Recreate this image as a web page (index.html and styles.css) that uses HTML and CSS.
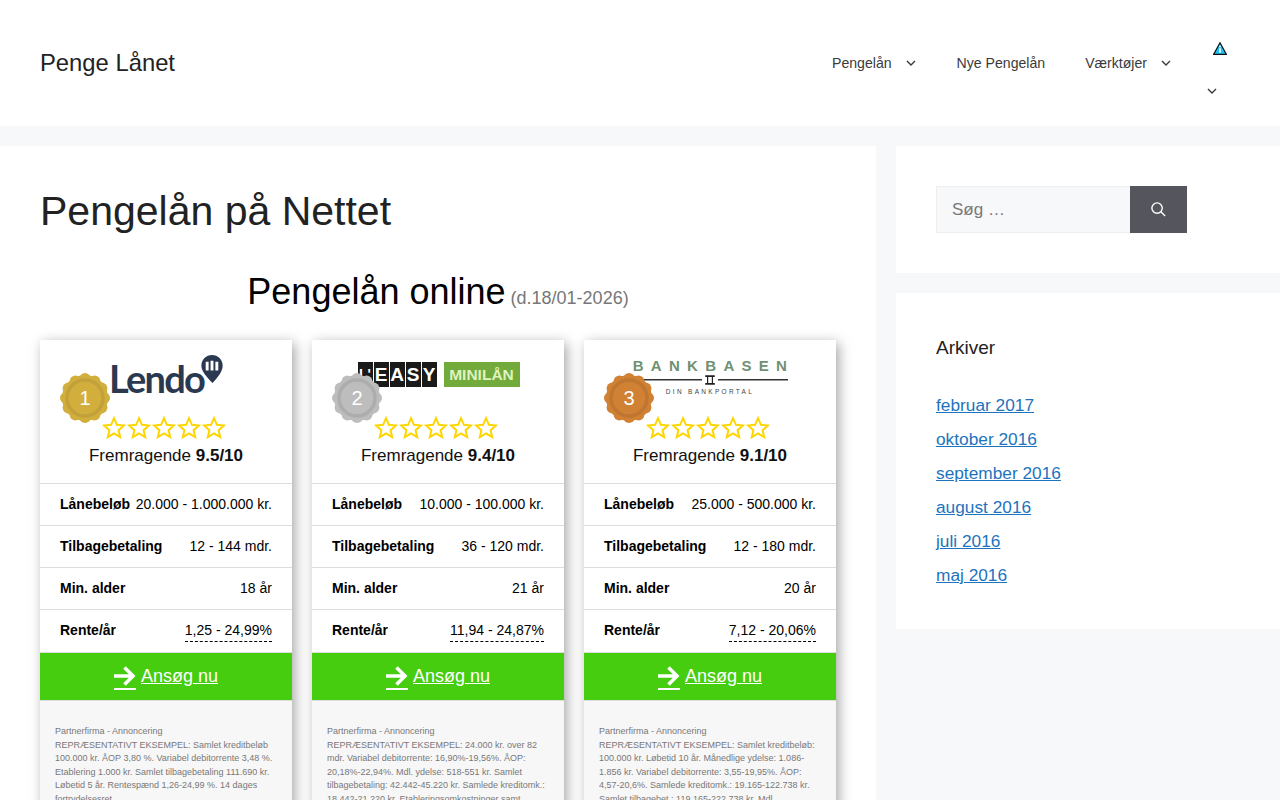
FILE: index.html
```html
<!DOCTYPE html>
<html lang="da">
<head>
<meta charset="utf-8">
<title>Pengelån på Nettet</title>
<link rel="stylesheet" href="styles.css">
</head>
<body>
<svg class="defs" width="0" height="0" aria-hidden="true">
  <symbol id="star" viewBox="0 0 24 24"><path d="M12 2.2l2.9 6.6 7.1.7-5.4 4.7 1.6 7-6.2-3.7-6.2 3.7 1.6-7L2 9.500l7.100-.7z"/></symbol>
  <symbol id="chev" viewBox="0 0 12 12"><path d="M2 4l4 4 4-4"/></symbol>
  <symbol id="medal" viewBox="0 0 50 50">
    <g class="lobes"><circle cx="25" cy="25" r="23"/><circle cx="25" cy="5.800" r="5.800"/><circle cx="34.600" cy="8.400" r="5.800"/><circle cx="41.600" cy="15.400" r="5.800"/><circle cx="44.200" cy="25" r="5.800"/><circle cx="41.600" cy="34.600" r="5.800"/><circle cx="34.600" cy="41.600" r="5.800"/><circle cx="25" cy="44.200" r="5.800"/><circle cx="15.400" cy="41.600" r="5.800"/><circle cx="8.400" cy="34.600" r="5.800"/><circle cx="5.800" cy="25" r="5.800"/><circle cx="8.400" cy="15.400" r="5.800"/><circle cx="15.400" cy="8.400" r="5.800"/></g>
    <circle class="ring" cx="25" cy="25" r="18"/>
  </symbol>
</svg>
<header class="site-header">
  <a class="brand" href="#">Penge Lånet</a>
  <nav class="nav">
    <a class="nav-item" href="#">Pengelån<svg class="chev"><use href="#chev"/></svg></a>
    <a class="nav-item" href="#">Nye Pengelån</a>
    <a class="nav-item" href="#">Værktøjer<svg class="chev"><use href="#chev"/></svg></a>
    <a class="nav-item nav-stack" href="#">
      <svg class="warn" viewBox="0 0 14 13"><path class="warn-bg" d="M7 .8L13.400 12.400H.6z"/><path class="warn-i" d="M6.200 3.700h1.600v1.500H6.200zM6.200 6.200h1.600v4.500H6.200z"/></svg>
      <svg class="chev"><use href="#chev"/></svg>
    </a>
  </nav>
</header>
<div class="layout">
  <main class="content">
    <h1>Pengelån på Nettet</h1>
    <h2 class="list-title">Pengelån online<small> (d.18/01-2026)</small></h2>
    <div class="cards">
      <article class="card medal-1">
        <div class="head">
          <svg class="medal"><use href="#medal"/></svg><span class="medal-num">1</span>
          <div class="logo"><span class="lendo">Lendo</span><svg class="pin" viewBox="0 0 22 30"><path d="M11 0a11 11 0 0 1 11 11c0 6-5 12-10.500 18C6 23 0 17 0 11A11 11 0 0 1 11 0z"/><path class="pin-bars" d="M4.500 7h3v9h-3zM9.500 6h3v10h-3zM14.500 7h3v9h-3z"/></svg></div>
          <div class="stars"><svg><use href="#star"/></svg><svg><use href="#star"/></svg><svg><use href="#star"/></svg><svg><use href="#star"/></svg><svg><use href="#star"/></svg></div>
          <p class="rating">Fremragende <b>9.5/10</b></p>
        </div>
        <div class="row"><b>Lånebeløb</b><span>20.000 - 1.000.000 kr.</span></div>
        <div class="row"><b>Tilbagebetaling</b><span>12 - 144 mdr.</span></div>
        <div class="row"><b>Min. alder</b><span>18 år</span></div>
        <div class="row"><b>Rente/år</b><span class="dashed">1,25 - 24,99%</span></div>
        <a class="apply" href="#"><svg class="arrow" viewBox="0 0 22 20"><path d="M0 10h19M10.500 1.500L19 10l-8.500 8.500"/></svg><span>Ansøg nu</span></a>
        <p class="legal">Partnerfirma - Annoncering<br>REPRÆSENTATIVT EKSEMPEL: Samlet kreditbeløb 100.000 kr. ÅOP 3,80 %. Variabel debitorrente 3,48 %. Etablering 1.000 kr. Samlet tilbagebetaling 111.690 kr. Løbetid 5 år. Rentespænd 1,26-24,99 %. 14 dages fortrydelsesret</p>
      </article>
      <article class="card medal-2">
        <div class="head">
          <svg class="medal"><use href="#medal"/></svg><span class="medal-num">2</span>
          <div class="logo logo-easy"><span class="tiles"><i>L'</i><i>E</i><i>A</i><i>S</i><i>Y</i></span><span class="mini">MINILÅN</span></div>
          <div class="stars"><svg><use href="#star"/></svg><svg><use href="#star"/></svg><svg><use href="#star"/></svg><svg><use href="#star"/></svg><svg><use href="#star"/></svg></div>
          <p class="rating">Fremragende <b>9.4/10</b></p>
        </div>
        <div class="row"><b>Lånebeløb</b><span>10.000 - 100.000 kr.</span></div>
        <div class="row"><b>Tilbagebetaling</b><span>36 - 120 mdr.</span></div>
        <div class="row"><b>Min. alder</b><span>21 år</span></div>
        <div class="row"><b>Rente/år</b><span class="dashed">11,94 - 24,87%</span></div>
        <a class="apply" href="#"><svg class="arrow" viewBox="0 0 22 20"><path d="M0 10h19M10.500 1.500L19 10l-8.500 8.500"/></svg><span>Ansøg nu</span></a>
        <p class="legal">Partnerfirma - Annoncering<br>REPRÆSENTATIVT EKSEMPEL: 24.000 kr. over 82 mdr. Variabel debitorrente: 16,90%-19,56%. ÅOP: 20,18%-22,94%. Mdl. ydelse: 518-551 kr. Samlet tilbagebetaling: 42.442-45.220 kr. Samlede kreditomk.: 18.442-21.220 kr. Etableringsomkostninger samt</p>
      </article>
      <article class="card medal-3">
        <div class="head">
          <svg class="medal"><use href="#medal"/></svg><span class="medal-num">3</span>
          <div class="logo bankbasen"><span class="bb-name">BANKBASEN</span><span class="bb-line"><svg viewBox="0 0 10 10"><path d="M1 1h8v1.500H1zM2.500 2.500h1v5h-1zM6.500 2.500h1v5h-1zM1 7.500h8V9H1z"/></svg></span><span class="bb-sub">DIN BANKPORTAL</span></div>
          <div class="stars"><svg><use href="#star"/></svg><svg><use href="#star"/></svg><svg><use href="#star"/></svg><svg><use href="#star"/></svg><svg><use href="#star"/></svg></div>
          <p class="rating">Fremragende <b>9.1/10</b></p>
        </div>
        <div class="row"><b>Lånebeløb</b><span>25.000 - 500.000 kr.</span></div>
        <div class="row"><b>Tilbagebetaling</b><span>12 - 180 mdr.</span></div>
        <div class="row"><b>Min. alder</b><span>20 år</span></div>
        <div class="row"><b>Rente/år</b><span class="dashed">7,12 - 20,06%</span></div>
        <a class="apply" href="#"><svg class="arrow" viewBox="0 0 22 20"><path d="M0 10h19M10.500 1.500L19 10l-8.500 8.500"/></svg><span>Ansøg nu</span></a>
        <p class="legal">Partnerfirma - Annoncering<br>REPRÆSENTATIVT EKSEMPEL: Samlet kreditbeløb: 100.000 kr. Løbetid 10 år. Månedlige ydelse: 1.086-1.856 kr. Variabel debitorrente: 3,55-19,95%. ÅOP: 4,57-20,6%. Samlede kreditomk.: 19.165-122.738 kr. Samlet tilbagebet.: 119.165-222.738 kr. Mdl.</p>
      </article>
    </div>
  </main>
  <aside class="sidebar">
    <section class="widget">
      <form class="search">
        <input class="search-input" type="search" placeholder="Søg …" aria-label="Søg">
        <button class="search-btn" type="button" aria-label="Søg"><svg viewBox="0 0 18 18"><circle cx="7.500" cy="7.500" r="5.500"/><path d="M11.500 11.500L16 16"/></svg></button>
      </form>
    </section>
    <section class="widget">
      <h2 class="widget-title">Arkiver</h2>
      <ul class="archive">
        <li><a href="#">februar 2017</a></li>
        <li><a href="#">oktober 2016</a></li>
        <li><a href="#">september 2016</a></li>
        <li><a href="#">august 2016</a></li>
        <li><a href="#">juli 2016</a></li>
        <li><a href="#">maj 2016</a></li>
      </ul>
    </section>
  </aside>
</div>
</body>
</html>
```
FILE: styles.css
```css
* { box-sizing: border-box; }
html, body { margin: 0; height: 800px; overflow: hidden; }
body { background: #f7f8f9; color: #222; font-family: "Liberation Sans", Arial, sans-serif; font-size: 17px; }
.defs { position: absolute; }
a { color: inherit; text-decoration: none; }

.site-header { background: #fff; height: 126px; padding: 20px 40px; display: flex; align-items: center; justify-content: space-between; }
.brand { font-size: 23.800px; color: #222; }
.nav { display: flex; align-items: center; height: 86px; color: #3a3a3a; font-size: 14.100px; margin-right: -7px; }
.nav-item { display: flex; align-items: center; padding: 0 20px; }
.nav-item .chev { width: 12px; height: 12px; margin-left: 13px; }
.chev { fill: none; stroke: #3a3a3a; stroke-width: 1.400; }
.nav-stack { flex-direction: column; align-items: center; gap: 30px; padding: 13px 20px 0 5px; }
.nav-stack .chev { margin-left: 0; }
.warn { width: 14px; height: 13px; margin-left: 16px; }
.warn-bg { fill: #1cc3f3; stroke: #111; stroke-width: 1.200; }
.warn-i { fill: #fff; }

.layout { display: flex; gap: 20px; margin-top: 20px; align-items: flex-start; }
.content { width: 876px; background: #fff; padding: 40px; flex: none; height: 700px; }
.sidebar { flex: 1; display: flex; flex-direction: column; gap: 20px; }
.widget { background: #fff; padding: 40px; }

h1 { margin: 0; font-size: 41px; font-weight: 400; line-height: 50px; color: #222; }
.list-title { margin: 35px 0 21px; font-size: 36px; font-weight: 400; line-height: 42px; text-align: center; color: #000; }
.list-title small { font-size: 18px; color: #777; }

.cards { display: flex; gap: 20px; }
.card { width: 252px; flex: none; background: #fff; box-shadow: 3px 3px 12px rgba(0, 0, 0, .35); color: #000; font-size: 14px; }
.head { position: relative; height: 144px; border-bottom: 1px solid #ddd; padding-top: 10px; text-align: center; }
.medal { position: absolute; z-index: 1; left: 20px; top: 33px; width: 50px; height: 50px; }
.medal-num { position: absolute; z-index: 2; left: 20px; top: 33px; width: 50px; line-height: 50px; color: #fff; font-size: 20px; text-align: center; }
.lobes { fill: var(--medal); }
.ring { fill: var(--medal); stroke: var(--ring); stroke-width: 3.500; }
.medal-1 { --medal: #d2af3d; --ring: #c3a13a; }
.medal-2 { --medal: #bdbdbd; --ring: #adadad; }
.medal-3 { --medal: #d08133; --ring: #bf7630; }

.logo { height: 60px; display: flex; justify-content: center; align-items: flex-start; }
.logo-easy { padding-left: 1px; }
.lendo { font-family: Lato, sans-serif; font-weight: 700; font-size: 38px; line-height: 38px; letter-spacing: -1.800px; color: #2b3950; margin-top: 9px; }
.pin { width: 22px; height: 29px; margin: 5px 0 0 -3px; fill: #2b3950; }
.pin-bars { fill: #fff; }
.tiles { display: flex; gap: 1px; margin-top: 12px; }
.tiles i { width: 15px; height: 25px; background: #1a1a1a; color: #fff; font: 700 19px/25px "Liberation Sans", sans-serif; text-align: center; overflow: hidden; white-space: nowrap; }
.tiles i:first-child { font-size: 14px; }
.mini { margin: 12px 0 0 7px; width: 76px; height: 25px; background: #72aa3c; color: #dff3bf; font: 700 15.500px/25px "Liberation Sans", sans-serif; text-align: center; }
.bankbasen { flex-direction: column; align-items: center; justify-content: flex-start; padding-top: 9px; }
.bb-name { color: #6f9172; font-size: 15px; line-height: 14px; font-weight: 700; letter-spacing: 7.300px; margin-right: -7px; }
.bb-line { width: 156px; height: 14px; display: flex; justify-content: center; align-items: center; background: linear-gradient(#333, #333) center / 100% 1.500px no-repeat; }
.bb-line svg { width: 16px; height: 12px; background: #fff; padding: 0 2px; fill: #222; }
.bb-sub { font-size: 6.500px; line-height: 8px; letter-spacing: 2.300px; color: #444; margin-top: 1px; }

.stars { display: flex; justify-content: center; gap: 1px; margin: 6px 5px 0 0; height: 24px; }
.stars svg { width: 24px; height: 24px; fill: none; stroke: #ffd500; stroke-width: 2; }
.rating { margin: 5px 0 0; font-size: 17px; line-height: 22px; color: #111; }

.row { height: 42px; padding: 0 20px 2px; display: flex; justify-content: space-between; align-items: center; border-bottom: 1px solid #ddd; }
.row:nth-of-type(5) { height: 43px; padding-bottom: 3px; }
.row b { font-weight: 700; }
.dashed { border-bottom: 1px dashed #000; padding-bottom: 3px; margin-top: 4px; }

.apply { display: flex; justify-content: center; align-items: center; height: 48px; background: #46cd10; color: #fff; font-size: 18px; border-bottom: 1px solid #ddd; }
.apply span { text-decoration: underline; }
.arrow { width: 22px; height: 24px; margin: 2px 5px 0 0; padding-bottom: 2px; fill: none; stroke: #fff; stroke-width: 3.500; border-bottom: 2px solid #fff; }
.legal { margin: 0; padding: 24px 15px 15px; background: #f7f7f7; font-size: 9px; line-height: 13.500px; color: #777; height: 300px; }

.search { display: flex; }
.search-input { width: 194px; height: 47px; border: 1px solid #eee; border-right: 0; background: #f7f8f9; padding: 0 15px; font: 17px "Liberation Sans", Arial, sans-serif; color: #666; outline: 0; }
.search-input::placeholder { color: #777; opacity: 1; }
.search-btn { width: 57px; height: 47px; border: 0; padding: 0; background: #55555e; display: flex; justify-content: center; align-items: center; }
.search-btn svg { width: 17px; height: 17px; fill: none; stroke: #fff; stroke-width: 1.500; }
.widget-title { margin: 0 0 25px; font-size: 19px; font-weight: 400; line-height: 30px; color: #222; }
.archive { list-style: none; margin: 0 0 -3px; padding: 0; font-size: 17.300px; }
.archive li { line-height: 34px; height: 34px; }
.archive a { color: #1e73be; text-decoration: underline; }
```
